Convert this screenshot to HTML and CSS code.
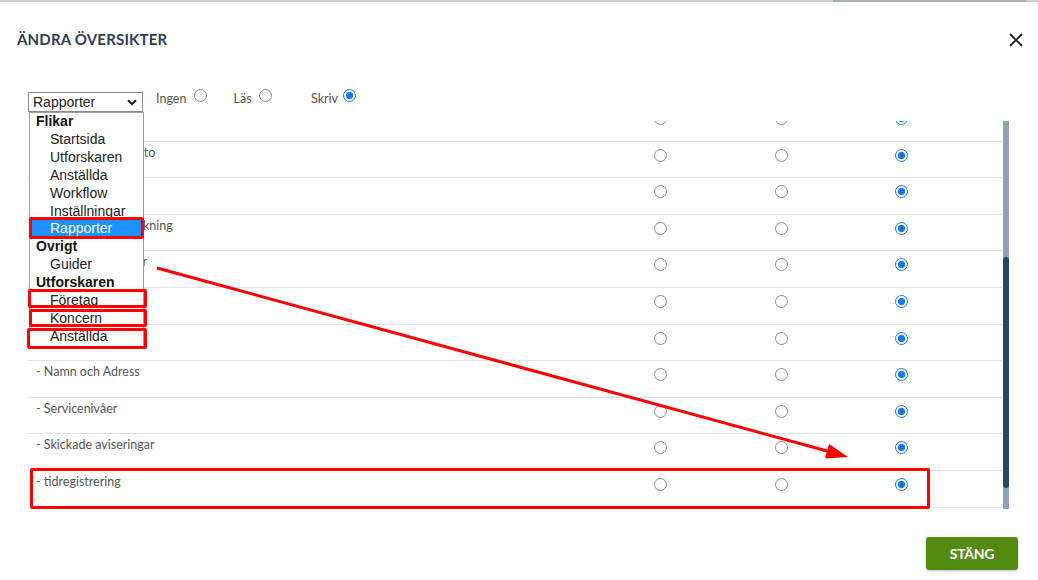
FILE: index.html
```html
<!DOCTYPE html>
<html lang="sv">
<head>
<meta charset="utf-8">
<title>Ändra översikter</title>
<link rel="stylesheet" href="styles.css">
</head>
<body>
<div class="topbar"><div class="topbar-seg"></div></div>

<header class="modal-header">
  <h1 class="title">ÄNDRA ÖVERSIKTER</h1>
  <button class="close" aria-label="Stäng">
    <svg width="14" height="14" viewBox="0 0 14 14"><path d="M1 1L13 13M13 1L1 13" stroke="#222" stroke-width="1.9" fill="none"/></svg>
  </button>
</header>

<div class="controls">
  <div class="select">
    <span>Rapporter</span>
    <svg width="10" height="7" viewBox="0 0 10 7"><path d="M1 1.2L5 5.2L9 1.2" stroke="#222" stroke-width="2" fill="none"/></svg>
  </div>
  <label class="opt opt-first"><span class="opt-text">Ingen</span><input class="radio" type="radio" name="all"></label>
  <label class="opt"><span class="opt-text">Läs</span><input class="radio" type="radio" name="all"></label>
  <label class="opt"><span class="opt-text">Skriv</span><input class="radio radio-tight" type="radio" name="all" checked></label>
</div>

<div class="body">
  <div class="viewport">
    <div class="rows">
      <div class="row"><span class="row-label">- Översikt</span><span class="cell"><input class="radio" type="radio" name="r0"></span><span class="cell"><input class="radio" type="radio" name="r0"></span><span class="cell"><input class="radio" type="radio" name="r0" checked></span></div>
      <div class="row"><span class="row-label">- Restid- och tidkonto</span><span class="cell"><input class="radio" type="radio" name="r1"></span><span class="cell"><input class="radio" type="radio" name="r1"></span><span class="cell"><input class="radio" type="radio" name="r1" checked></span></div>
      <div class="row"><span class="row-label">- Frånvaro</span><span class="cell"><input class="radio" type="radio" name="r2"></span><span class="cell"><input class="radio" type="radio" name="r2"></span><span class="cell"><input class="radio" type="radio" name="r2" checked></span></div>
      <div class="row"><span class="row-label">- Semesterlöneberäkning</span><span class="cell"><input class="radio" type="radio" name="r3"></span><span class="cell"><input class="radio" type="radio" name="r3"></span><span class="cell"><input class="radio" type="radio" name="r3" checked></span></div>
      <div class="row"><span class="row-label">- Anställningsformer</span><span class="cell"><input class="radio" type="radio" name="r4"></span><span class="cell"><input class="radio" type="radio" name="r4"></span><span class="cell"><input class="radio" type="radio" name="r4" checked></span></div>
      <div class="row"><span class="row-label">- Lönehistorik</span><span class="cell"><input class="radio" type="radio" name="r5"></span><span class="cell"><input class="radio" type="radio" name="r5"></span><span class="cell"><input class="radio" type="radio" name="r5" checked></span></div>
      <div class="row"><span class="row-label">- Kontakter</span><span class="cell"><input class="radio" type="radio" name="r6"></span><span class="cell"><input class="radio" type="radio" name="r6"></span><span class="cell"><input class="radio" type="radio" name="r6" checked></span></div>
      <div class="row"><span class="row-label">- Namn och Adress</span><span class="cell"><input class="radio" type="radio" name="r7"></span><span class="cell"><input class="radio" type="radio" name="r7"></span><span class="cell"><input class="radio" type="radio" name="r7" checked></span></div>
      <div class="row"><span class="row-label">- Servicenivåer</span><span class="cell"><input class="radio" type="radio" name="r8"></span><span class="cell"><input class="radio" type="radio" name="r8"></span><span class="cell"><input class="radio" type="radio" name="r8" checked></span></div>
      <div class="row"><span class="row-label">- Skickade aviseringar</span><span class="cell"><input class="radio" type="radio" name="r9"></span><span class="cell"><input class="radio" type="radio" name="r9"></span><span class="cell"><input class="radio" type="radio" name="r9" checked></span></div>
      <div class="row"><span class="row-label">- tidregistrering</span><span class="cell"><input class="radio" type="radio" name="r10"></span><span class="cell"><input class="radio" type="radio" name="r10"></span><span class="cell"><input class="radio" type="radio" name="r10" checked></span></div>
    </div>
  </div>
  <div class="scrollbar"><div class="thumb"></div></div>
</div>

<div class="footer"><button class="btn">STÄNG</button></div>

<ul class="dropdown">
  <li class="group">Flikar</li>
  <li class="item">Startsida</li>
  <li class="item">Utforskaren</li>
  <li class="item">Anställda</li>
  <li class="item">Workflow</li>
  <li class="item">Inställningar</li>
  <li class="item selected">Rapporter</li>
  <li class="group">Ovrigt</li>
  <li class="item">Guider</li>
  <li class="group">Utforskaren</li>
  <li class="item">Företag</li>
  <li class="item">Koncern</li>
  <li class="item">Anställda</li>
</ul>

<div class="mark mark-rap"></div>
<div class="mark mark-for"></div>
<div class="mark mark-kon"></div>
<div class="mark mark-ans"></div>
<div class="mark mark-row"></div>

<svg class="arrow" width="1038" height="580" viewBox="0 0 1038 580">
  <line x1="157" y1="268" x2="829" y2="451.5" stroke="#f00" stroke-width="3"/>
  <polygon points="848,457 825,458.5 829,444" fill="#f00"/>
</svg>
</body>
</html>
```

FILE: styles.css
```css
html, body {
  margin: 0;
  padding: 0;
}

body {
  position: relative;
  width: 1038px;
  height: 580px;
  overflow: hidden;
  background: #fff;
  font-family: Lato, "Open Sans", sans-serif;
}

.topbar {
  display: flex;
  height: 2px;
  background: #c8cdd8;
}

.topbar-seg {
  margin-left: 833px;
  width: 193px;
  background: #a7b0be;
}

.modal-header {
  display: flex;
  align-items: center;
  justify-content: space-between;
  height: 36px;
  margin-top: 19px;
  padding: 0 15px 0 17px;
}

.title {
  margin: 0;
  font-family: Lato, sans-serif;
  font-weight: 700;
  font-size: 15px;
  line-height: 20px;
  letter-spacing: 0.2px;
  color: #2d3f56;
}

.close {
  display: block;
  width: 14px;
  height: 14px;
  margin-top: 2px;
  padding: 0;
  border: 0;
  background: none;
}

.close svg {
  display: block;
}

.controls {
  display: flex;
  align-items: flex-start;
  height: 22px;
  margin: 33px 0 0 28px;
}

.select {
  box-sizing: border-box;
  display: flex;
  align-items: center;
  justify-content: space-between;
  width: 115px;
  height: 20px;
  margin-top: 2px;
  padding: 1px 5px 0 4px;
  border: 1px solid #8a8a8a;
  font-family: "Liberation Sans", Arial, sans-serif;
  font-size: 14px;
  line-height: 17px;
  color: #222;
}

.select svg {
  display: block;
}

.opt {
  display: flex;
  align-items: flex-start;
  width: 77.5px;
  font-size: 12.5px;
  line-height: 16px;
  color: #555;
}

.opt-first {
  margin-left: 13px;
}

.opt-text {
  padding-top: 1px;
}

.opt .radio {
  margin-left: 7.5px;
  margin-top: -1px;
}

.opt .radio-tight {
  margin-left: 5px;
}

.radio {
  -webkit-appearance: none;
  appearance: none;
  box-sizing: border-box;
  flex: none;
  width: 13px;
  height: 13px;
  margin: 0;
  border: 1px solid #8e8e8e;
  border-radius: 50%;
  background: #fff;
}

.radio:checked {
  border: 1.5px solid #1677f3;
  background: radial-gradient(circle, #1677f3 0 3.3px, #fff 3.9px);
}

.body {
  display: flex;
  width: 981px;
  height: 388px;
  margin: 9px 0 0 28px;
}

.viewport {
  width: 974px;
  overflow: hidden;
}

.rows {
  margin-top: -16px;
}

.row {
  display: grid;
  grid-template-columns: 1fr 121px 120px 120px 41px;
  align-items: start;
  box-sizing: border-box;
  height: 36.6px;
  border-bottom: 1px solid #e2e2e2;
}

.row-label {
  padding: 3px 0 0 8px;
  font-size: 12.5px;
  line-height: 16px;
  color: #555;
  white-space: nowrap;
}

.cell {
  display: flex;
  justify-content: center;
  padding-top: 7px;
}

.scrollbar {
  width: 6px;
  margin-left: 1px;
  background: #8fa3b5;
}

.thumb {
  height: 231px;
  margin-top: 136px;
  border-radius: 3px;
  background: #2b4660;
}

.footer {
  display: flex;
  justify-content: flex-end;
  margin-top: 28px;
  padding-right: 20px;
}

.btn {
  width: 92px;
  height: 33px;
  padding: 0;
  border: 0;
  border-radius: 3px;
  background: #528b10;
  color: #fff;
  font-family: Lato, sans-serif;
  font-weight: 700;
  font-size: 14px;
  letter-spacing: -0.3px;
  box-shadow: 0 1px 3px rgba(0, 0, 0, 0.25);
}

.dropdown {
  position: absolute;
  left: 29px;
  top: 112px;
  box-sizing: border-box;
  width: 115px;
  margin: 0;
  padding: 0;
  list-style: none;
  border: 1px solid #a0a0a0;
  background: #fff;
  font-family: "Liberation Sans", Arial, sans-serif;
  font-size: 14px;
  line-height: 17.9px;
  color: #222;
}

.group {
  padding-left: 6px;
  font-weight: 700;
  color: #111;
}

.item {
  padding-left: 20px;
}

.item.selected {
  background: #1e90ff;
  color: #fff;
}

.mark {
  position: absolute;
  box-sizing: border-box;
  border: 3px solid #f00;
  border-radius: 2px;
}

.mark-rap { left: 29px; top: 217px; width: 115px; height: 22px; }
.mark-for { left: 28px; top: 289px; width: 119px; height: 19px; }
.mark-kon { left: 29px; top: 309px; width: 118px; height: 18px; }
.mark-ans { left: 27px; top: 328px; width: 120px; height: 21px; }
.mark-row { left: 30px; top: 468px; width: 900px; height: 41px; }

.arrow {
  position: absolute;
  left: 0;
  top: 0;
  pointer-events: none;
}
```
